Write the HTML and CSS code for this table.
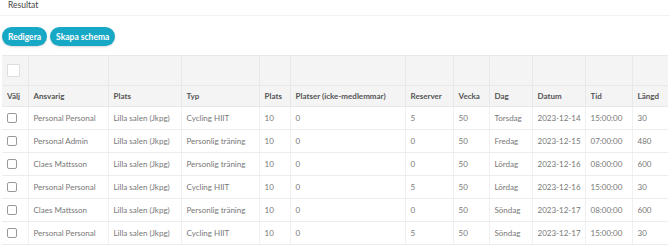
FILE: index.html
```html
<!DOCTYPE html>
<html lang="sv">
<head>
  <meta charset="UTF-8" />
  <title>Resultat</title>
  <link rel="stylesheet" href="styles.css">
</head>
<body>
  <!-- ======= HEADER ======= -->
  <header class="page-head">Resultat</header>

  <!-- ======= ACTIONS ======= -->
  <div class="actions">
    <button class="btn">Redigera</button>
    <button class="btn">Skapa schema</button>
  </div>

  <!-- ======= RESULT TABLE ======= -->
  <table class="result">
    <colgroup>
      <col style="width:26px"><col style="width:80px"><col style="width:73px"><col style="width:78px">
      <col style="width:31px"><col style="width:115px"><col style="width:48px"><col style="width:36px">
      <col style="width:43px"><col style="width:53px"><col style="width:47px"><col style="width:36px">
    </colgroup>
    <thead>
      <tr class="filter-row">
        <th><span class="box big"></span></th>
        <th></th><th></th><th></th><th></th><th></th><th></th><th></th><th></th><th></th><th></th><th></th>
      </tr>
      <tr class="label-row">
        <th>Välj</th><th>Ansvarig</th><th>Plats</th><th>Typ</th><th>Plats</th><th>Platser (icke-medlemmar)</th>
        <th>Reserver</th><th>Vecka</th><th>Dag</th><th>Datum</th><th>Tid</th><th>Längd</th>
      </tr>
    </thead>
    <tbody>
      <tr><td><span class="box"></span></td><td>Personal Personal</td><td>Lilla salen (Jkpg)</td><td>Cycling HIIT</td><td>10</td><td>0</td><td>5</td><td>50</td><td>Torsdag</td><td>2023-12-14</td><td>15:00:00</td><td>30</td></tr>
      <tr><td><span class="box"></span></td><td>Personal Admin</td><td>Lilla salen (Jkpg)</td><td>Personlig träning</td><td>10</td><td>0</td><td>0</td><td>50</td><td>Fredag</td><td>2023-12-15</td><td>07:00:00</td><td>480</td></tr>
      <tr><td><span class="box"></span></td><td>Claes Mattsson</td><td>Lilla salen (Jkpg)</td><td>Personlig träning</td><td>10</td><td>0</td><td>0</td><td>50</td><td>Lördag</td><td>2023-12-16</td><td>08:00:00</td><td>600</td></tr>
      <tr><td><span class="box"></span></td><td>Personal Personal</td><td>Lilla salen (Jkpg)</td><td>Cycling HIIT</td><td>10</td><td>0</td><td>5</td><td>50</td><td>Lördag</td><td>2023-12-16</td><td>15:00:00</td><td>30</td></tr>
      <tr><td><span class="box"></span></td><td>Claes Mattsson</td><td>Lilla salen (Jkpg)</td><td>Personlig träning</td><td>10</td><td>0</td><td>0</td><td>50</td><td>Söndag</td><td>2023-12-17</td><td>08:00:00</td><td>600</td></tr>
      <tr><td><span class="box"></span></td><td>Personal Personal</td><td>Lilla salen (Jkpg)</td><td>Cycling HIIT</td><td>10</td><td>0</td><td>5</td><td>50</td><td>Söndag</td><td>2023-12-17</td><td>15:00:00</td><td>30</td></tr>
    </tbody>
  </table>
</body>
</html>
```

FILE: styles.css
```css
/* ======= GLOBAL ======= */
*,*::before,*::after{box-sizing:border-box;margin:0;padding:0}

body {
  font-family: Lato, "Liberation Sans", sans-serif;
  background: #fff;
  color: #666;
  font-size: 8px;
}

/* ======= HEADER ======= */
.page-head{height:16px;padding:0 8px;line-height:10px;font-size:8.5px;color:#444;border-bottom:1px solid #f2f2f2}

/* ======= ACTIONS ======= */
.actions{display:flex;gap:3px;padding:11px 2px 9px}
.btn{height:19px;padding:0 6px;border:0;border-radius:10px;background:#17a8c6;color:#fff;font-family:inherit;font-size:8.5px;font-weight:700;box-shadow:0 1px 2px rgba(0,0,0,.15)}

/* ======= TABLE ======= */
.result{margin-left:2px;width:666px;table-layout:fixed;border-collapse:collapse}
.result th,.result td{text-align:left;padding:0 5px;white-space:nowrap;overflow:hidden;border:1px solid #ececec}
.result thead th{background:#f4f4f4;border-color:#e8e8e8;color:#555;font-weight:700}
.filter-row th{height:30px}
.label-row th{height:21px}
.result td{height:23px;color:#777;border-left-color:#f0f0f0;border-right-color:#f0f0f0}
.result tr > :first-child{border-left:0}
.result tr > :last-child{border-right:0}

.box{display:block;width:10px;height:10px;border:1px solid #999;border-radius:2px;background:#fff}
.box.big{width:13px;height:13px;border-color:#ddd;border-radius:1px}
```
